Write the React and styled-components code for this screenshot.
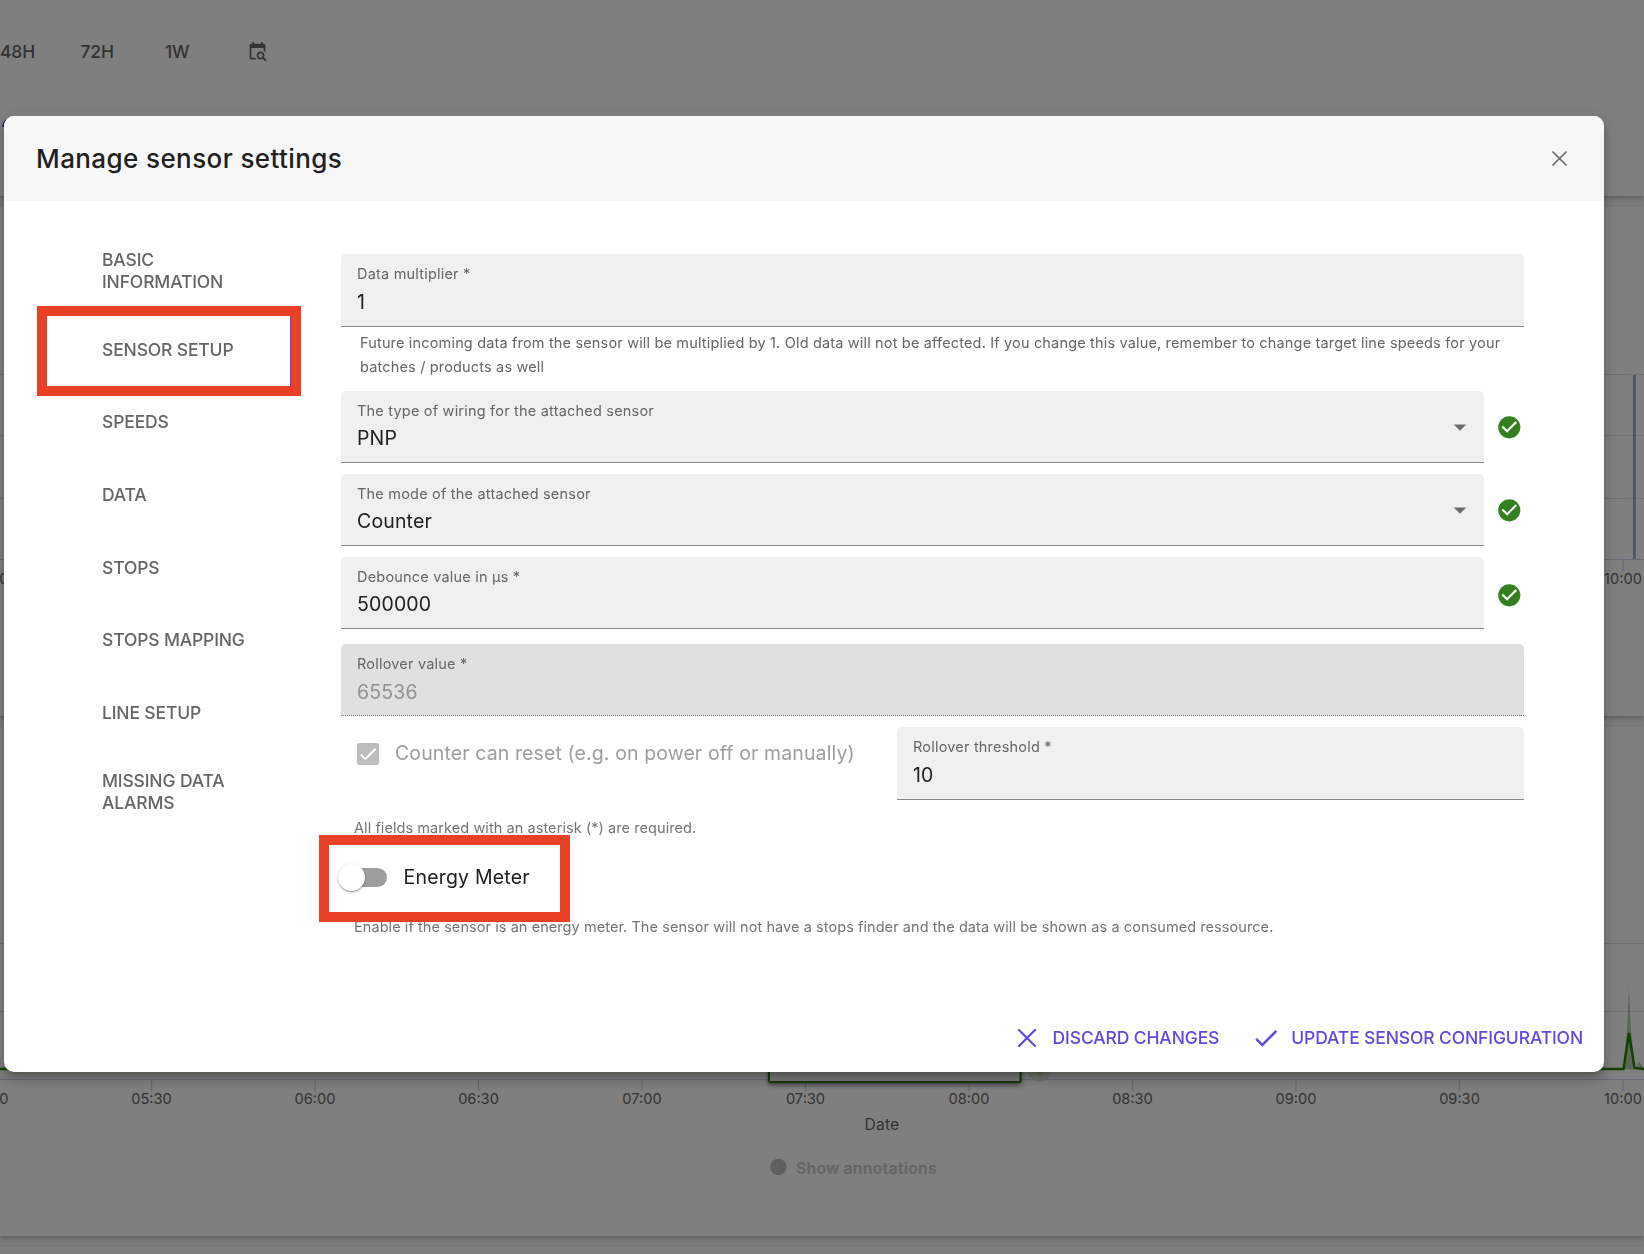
import React from "react"
import styled, { createGlobalStyle } from "styled-components"
import { MdArrowDropDown, MdCheck, MdCheckCircle } from "react-icons/md"

const tabs = [
  { name: "BASIC INFORMATION", tall: true },
  { name: "SENSOR SETUP", active: true },
  { name: "SPEEDS" },
  { name: "DATA" },
  { name: "STOPS" },
  { name: "STOPS MAPPING" },
  { name: "LINE SETUP" },
  { name: "MISSING DATA ALARMS", tall: true },
]

const times = [
  "05:00",
  "05:30",
  "06:00",
  "06:30",
  "07:00",
  "07:30",
  "08:00",
  "08:30",
  "09:00",
  "09:30",
  "10:00",
]
const timeX = i => -12 + i * 163.5

const TimeAxis = ({ y }) => (
  <g>
    <line x1="0" x2="1644" y1={y} y2={y} stroke="#ccd6eb" />
    {times.map((time, i) => (
      <g key={time}>
        <line x1={timeX(i)} x2={timeX(i)} y1={y} y2={y + 12} stroke="#ccd6eb" strokeWidth="1.3" />
        <AxisText x={timeX(i)} y={y + 24.5}>
          {time}
        </AxisText>
      </g>
    ))}
  </g>
)

const Cross = ({ size, weight }) => (
  <svg width={size} height={size} viewBox={`0 0 ${size} ${size}`}>
    <path
      d={`M1 1L${size - 1} ${size - 1}M${size - 1} 1L1 ${size - 1}`}
      stroke="currentColor"
      strokeWidth={weight}
      strokeLinecap="round"
    />
  </svg>
)

const Field = ({ label, value, select, disabled, tight, height }) => (
  <FieldBox $disabled={disabled} $height={height}>
    <FieldText $tight={tight}>
      <Label>{label}</Label>
      <Value $disabled={disabled}>{value}</Value>
    </FieldText>
    {select && <Arrow />}
  </FieldBox>
)

const Dashboard = () => (
  <Page>
    <Panel $height={196}>
      <Ranges>
        <Range $width={80.5}>48H</Range>
        <Range $width={84.5}>72H</Range>
        <Range $width={81.5}>1W</Range>
        <svg width="21" height="21" viewBox="0 0 24 24" fill="currentColor">
          <path d="M15.5,12C18,12 20,14 20,16.5C20,17.38 19.75,18.21 19.31,18.9L22.39,22L21,23.39L17.88,20.32C17.19,20.75 16.37,21 15.5,21C13,21 11,19 11,16.5C11,14 13,12 15.5,12M15.5,14A2.5,2.5 0 0,0 13,16.5A2.5,2.5 0 0,0 15.5,19A2.5,2.5 0 0,0 18,16.5A2.5,2.5 0 0,0 15.5,14M19,8H5V19H9.5C9.81,19.75 10.26,20.42 10.81,21H5C3.89,21 3,20.1 3,19V5C3,3.89 3.89,3 5,3H6V1H8V3H16V1H18V3H19A2,2 0 0,1 21,5V13.03C20.5,12.22 19.8,11.54 19,11V8Z" />
        </svg>
      </Ranges>
      <Marker />
    </Panel>
    <Panel $height={509}>
      <svg width="1644" height="509" viewBox="0 207 1644 509">
        <path d="M0 374.5H1644M0 435.5H1644M0 498.5H1644" stroke="#e0e0e0" />
        <TimeAxis y={559.5} />
        <path d="M1631.5 374V559M1637.5 374V559" stroke="#fff" />
        <rect x="1633" y="375" width="3" height="184" fill="#a8c0dc" />
        <rect x="1633" y="375" width="2" height="184" fill="#88add8" />
      </svg>
    </Panel>
    <Panel $height={509}>
      <svg width="1644" height="509" viewBox="0 727 1644 509">
        <path d="M0 943.5H1644M0 1011.5H1644" stroke="#dcdcdc" />
        <path d="M1623 1069L1627 1030L1629 987L1631 1030L1635 1069L1639 1062L1644 1068V1070Z" fill="#b4cdb0" />
        <path d="M0 1069H1623.5L1629 1033L1634.5 1068L1644 1069" fill="none" stroke="#2b8000" strokeWidth="2.4" />
        <TimeAxis y={1079.5} />
        <circle cx="1039.5" cy="1069" r="12.5" fill="#e2e9e0" />
        <path d="M1034 1071H1045L1039.5 1077Z" fill="#b8dbb0" />
        <SelectedRange x="769" y="960" width="251.5" height="122" rx="1.5" />
        <AxisTitle x="882" y="1130">
          Date
        </AxisTitle>
        <circle cx="778.5" cy="1167" r="8.2" fill="#c0c0c0" />
        <Legend x="796" y="1173.5">
          Show annotations
        </Legend>
      </svg>
    </Panel>
    <Panel $height={20} />
  </Page>
)

const App = () => {
  return (
    <>
      <GlobalStyle />
      <Dashboard />
      <Overlay>
        <Dialog>
          <DialogHeader>
            <Title>Manage sensor settings</Title>
            <Close>
              <Cross size={15} weight={1.7} />
            </Close>
          </DialogHeader>
          <DialogBody>
            <Tabs>
              {tabs.map(tab => (
                <Tab key={tab.name} $tall={tab.tall} $active={tab.active}>
                  {tab.name}
                </Tab>
              ))}
            </Tabs>
            <Form>
              <Field label="Data multiplier *" value="1" height={73} />
              <Helper>
                Future incoming data from the sensor will be multiplied by 1. Old data will not be
                affected. If you change this value, remember to change target line speeds for your
                <br />
                batches / products as well
              </Helper>
              <CheckedRow>
                <Field
                  label="The type of wiring for the attached sensor"
                  value="PNP"
                  select
                  tight
                />
                <Ok />
              </CheckedRow>
              <CheckedRow>
                <Field label="The mode of the attached sensor" value="Counter" select tight />
                <Ok />
              </CheckedRow>
              <CheckedRow $drop>
                <Field label="Debounce value in µs *" value="500000" tight />
                <Ok />
              </CheckedRow>
              <Rollover>
                <Field label="Rollover value *" value="65536" disabled />
              </Rollover>
              <SplitRow>
                <CheckLabel>
                  <CheckBox>
                    <MdCheck size={22} />
                  </CheckBox>
                  Counter can reset (e.g. on power off or manually)
                </CheckLabel>
                <Field label="Rollover threshold *" value="10" height={73} />
              </SplitRow>
              <Note $top={16}>All fields marked with an asterisk (*) are required.</Note>
              <SwitchRow>
                <Switch>
                  <Thumb />
                </Switch>
                Energy Meter
              </SwitchRow>
              <Note $top={11}>
                Enable if the sensor is an energy meter. The sensor will not have a stops finder and
                the data will be shown as a consumed ressource.
              </Note>
            </Form>
          </DialogBody>
          <Actions>
            <Action $gap={16.5} $nudge={1}>
              <Cross size={18} weight={2.2} />
              DISCARD CHANGES
            </Action>
            <Action $gap={10.5} $nudge={0.5}>
              <MdCheck size={30} />
              UPDATE SENSOR CONFIGURATION
            </Action>
          </Actions>
          <Highlight $left={33} $top={190} $width={264} $height={90} />
          <Highlight $left={315} $top={719} $width={251} $height={87} />
        </Dialog>
      </Overlay>
    </>
  )
}

export default App

const GlobalStyle = createGlobalStyle`
  * {
    box-sizing: border-box;
  }
  body {
    margin: 0;
    overflow: hidden;
    font-family: Inter, "Liberation Sans", sans-serif;
  }
  svg {
    display: block;
    flex-shrink: 0;
  }
`
const Page = styled.div`
  width: 1644px;
  height: 1254px;
  display: flex;
  flex-direction: column;
  gap: 11px;
  overflow: hidden;
  background: #f6f6f6;
  color: #666;
`
const Panel = styled.section`
  height: ${props => props.$height}px;
  flex-shrink: 0;
  background: #fff;
  box-shadow: 0 2px 4px rgba(0, 0, 0, 0.25);
`
const Ranges = styled.div`
  display: flex;
  align-items: center;
  height: 103px;
`
const Range = styled.span`
  width: ${props => props.$width}px;
  font-size: 17.5px;
  font-weight: 500;
  letter-spacing: -0.15px;
`
const Marker = styled.div`
  width: 30px;
  height: 10px;
  margin: 14px 0 0 2px;
  border-radius: 10px 0 0 0;
  background: #5a3fc8;
`
const AxisText = styled.text`
  font-size: 14.6px;
  text-anchor: middle;
  fill: #666;
`
const AxisTitle = styled.text`
  font-size: 15.6px;
  letter-spacing: 0.2px;
  text-anchor: middle;
  fill: #666;
`
const Legend = styled.text`
  font-size: 15.6px;
  font-weight: 700;
  letter-spacing: 0.25px;
  fill: #ccc;
`
const SelectedRange = styled.rect`
  fill: #f2f2f2;
  stroke: #2b7a10;
  stroke-width: 2px;
  filter: drop-shadow(0 2px 2px rgba(0, 0, 0, 0.5));
`
const Overlay = styled.div`
  position: fixed;
  inset: 0;
  padding: 116px 40px 0 4px;
  background: rgba(0, 0, 0, 0.5);
`
const Dialog = styled.div`
  position: relative;
  display: flex;
  flex-direction: column;
  width: 1600px;
  height: 956px;
  border-radius: 10px;
  overflow: visible;
  background: #fff;
  color: #212121;
  box-shadow: 0 5px 6px -3px rgba(0, 0, 0, 0.2), 0 8px 12px 1px rgba(0, 0, 0, 0.14),
    0 3px 16px 2px rgba(0, 0, 0, 0.12);
`
const DialogHeader = styled.header`
  display: flex;
  justify-content: space-between;
  align-items: center;
  height: 85px;
  padding: 0 37px 0 32px;
  border-radius: 10px 10px 0 0;
  background: #f7f7f7;
`
const Title = styled.h2`
  margin: 0;
  font-size: 26px;
  font-weight: 500;
  letter-spacing: 0.4px;
`
const Close = styled.div`
  color: #6b6b6b;
`
const DialogBody = styled.div`
  display: flex;
  flex: 1;
`
const Tabs = styled.nav`
  width: 288px;
  padding: 27px 0 0 33px;
`
const Tab = styled.div`
  display: flex;
  align-items: center;
  height: ${props => (props.$tall ? 85.5 : 72.6)}px;
  padding: 0 40px 0 65px;
  border-right: 2px solid ${props => (props.$active ? "#6546e5" : "transparent")};
  font-size: 17.5px;
  line-height: 22px;
  font-weight: 500;
  letter-spacing: -0.15px;
  color: #666;
`
const Form = styled.div`
  width: 1183px;
  margin: 53px 0 0 49px;
`
const FieldBox = styled.div`
  display: flex;
  flex: 1;
  align-items: center;
  justify-content: space-between;
  height: ${props => props.$height || 72}px;
  padding: 0 9px 0 16px;
  border-radius: 5px 5px 0 0;
  border-bottom: 1px ${props => (props.$disabled ? "dotted #777" : "solid #8a8a8a")};
  background: ${props => (props.$disabled ? "#e0e0e0" : "#f0f0f0")};
`
const FieldText = styled.div`
  display: flex;
  flex-direction: column;
  align-self: flex-start;
  gap: ${props => (props.$tight ? 3 : 4)}px;
  padding-top: 10px;
`
const Label = styled.span`
  font-size: 14.5px;
  line-height: 20px;
  letter-spacing: 0.2px;
  color: #666;
`
const Value = styled.span`
  font-size: 19.5px;
  line-height: 28px;
  letter-spacing: 0.15px;
  color: ${props => (props.$disabled ? "#929292" : "#212121")};
`
const Arrow = styled(MdArrowDropDown)`
  font-size: 30px;
  color: #6b6b6b;
`
const Helper = styled.p`
  margin: 4px 0 12px 19px;
  font-size: 14.5px;
  line-height: 24px;
  letter-spacing: 0.165px;
  white-space: nowrap;
  color: #666;
`
const CheckedRow = styled.div`
  display: flex;
  align-items: center;
  gap: 11.5px;
  margin-bottom: 11px;
  svg:last-child {
    position: relative;
    top: ${props => (props.$drop ? 2 : 0)}px;
  }
`
const Ok = styled(MdCheckCircle)`
  width: 26.6px;
  height: 26.6px;
  margin-right: 1.9px;
  color: #348021;
`
const Rollover = styled.div`
  margin: 15px 0 11px;
`
const SplitRow = styled.div`
  display: grid;
  grid-template-columns: 556px 627px;
`
const CheckLabel = styled.div`
  display: flex;
  align-items: center;
  gap: 16px;
  height: 52px;
  padding-left: 16px;
  font-size: 19.5px;
  letter-spacing: 0.11px;
  color: #9e9e9e;
`
const CheckBox = styled.span`
  display: flex;
  align-items: center;
  justify-content: center;
  width: 22px;
  height: 22px;
  margin-top: 1px;
  border-radius: 2.5px;
  background: #bdbdbd;
  color: #fff;
`
const Note = styled.p`
  margin: ${props => props.$top}px 0 0 13px;
  font-size: 14.5px;
  line-height: 24px;
  letter-spacing: 0.07px;
  white-space: nowrap;
  color: #757575;
`
const SwitchRow = styled.div`
  display: flex;
  align-items: center;
  gap: 16.5px;
  height: 54px;
  margin-top: 10px;
  font-size: 19.5px;
  letter-spacing: 0.2px;
`
const Switch = styled.span`
  display: flex;
  align-items: center;
  width: 46px;
  height: 19px;
  border-radius: 10px;
  background: #9e9e9e;
`
const Thumb = styled.span`
  width: 27px;
  height: 27px;
  flex-shrink: 0;
  margin-left: -3px;
  border-radius: 50%;
  background: #fff;
  box-shadow: 0 2px 1px -1px rgba(0, 0, 0, 0.2), 0 1px 1px rgba(0, 0, 0, 0.14),
    0 1px 3px rgba(0, 0, 0, 0.22);
`
const Actions = styled.footer`
  display: flex;
  justify-content: flex-end;
  gap: 31.5px;
  padding: 0 21px 21px 0;
`
const Action = styled.div`
  display: flex;
  align-items: center;
  gap: ${props => props.$gap}px;
  height: 28px;
  font-size: 17.5px;
  font-weight: 500;
  letter-spacing: -0.13px;
  color: #6546e5;
  svg {
    margin-top: ${props => props.$nudge * 2}px;
  }
`
const Highlight = styled.div`
  position: absolute;
  left: ${props => props.$left}px;
  top: ${props => props.$top}px;
  width: ${props => props.$width}px;
  height: ${props => props.$height}px;
  border: 10px solid #ea4025;
`
